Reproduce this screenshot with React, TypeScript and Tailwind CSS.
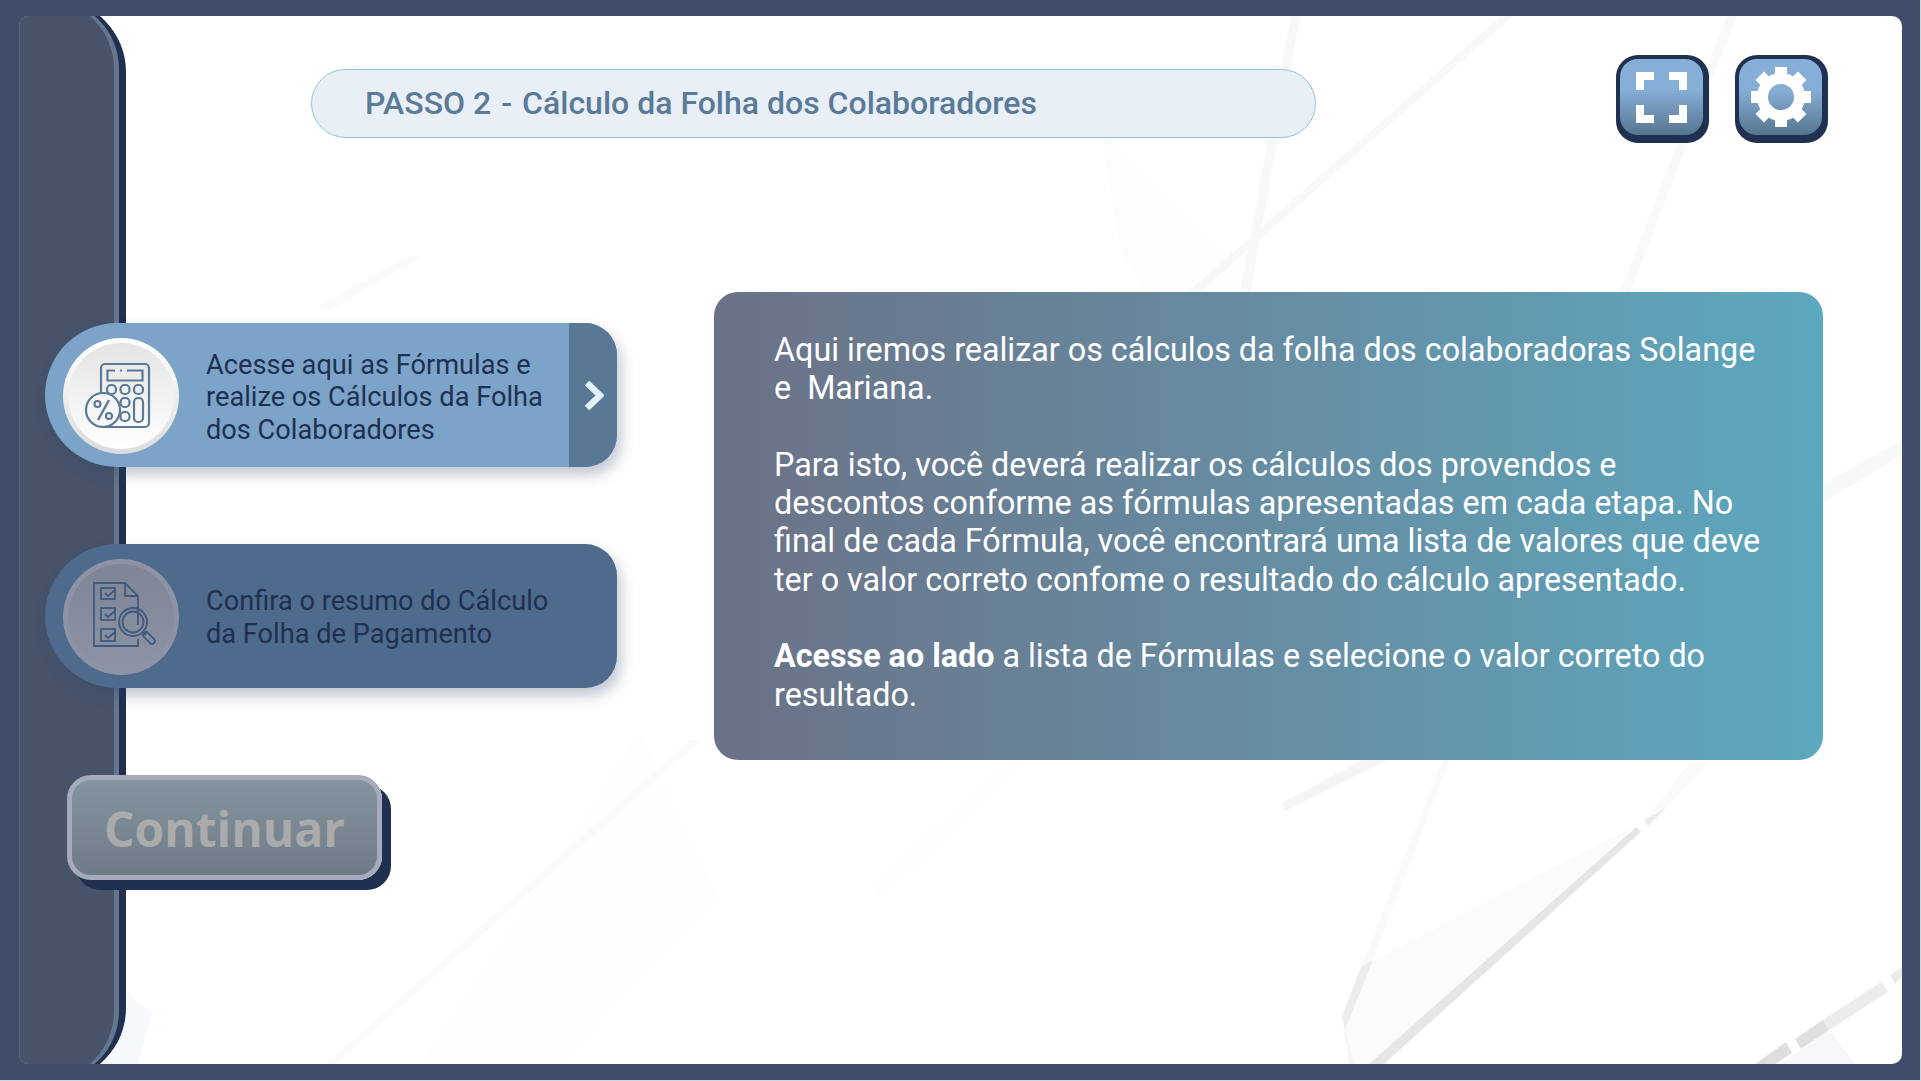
import React from "react";

function Shards() {
  return (
    <svg className="absolute inset-0 h-full w-full" viewBox="19 16 1883 1048" preserveAspectRatio="none" aria-hidden="true">
      {/* soft fills */}
      <polygon points="1636,825 1369,1064 1355,1064 1342,1017 1361,967" fill="#fafbfd" />
      <polygon points="1100,130 1270,300 1240,300 1150,300 1120,250" fill="#fdfdfe" />
      <polygon points="126,992 152,1014 138,1064 100,1064" fill="#f6f9fc" />
      <polygon points="1780,1064 1830,1030 1855,1064" fill="#f5f7fb" />
      <polygon points="640,730 720,900 560,1064 420,1064" fill="#fefefe" />
      {/* faint long lines */}
      <polygon points="1501,16 1513,16 1200,292 1188,292" fill="#f7f8f8" />
      <polygon points="1291,16 1300,16 1250,292 1240,292" fill="#f8f8f8" />
      <polygon points="1727,16 1737,16 1630,292 1620,292" fill="#f9f9f9" />
      <polygon points="1442,760 1450,760 1373,960 1361,967" fill="#f9fafa" />
      <polygon points="1362,760 1388,760 1285,812 1282,803" fill="#f4f6f5" />
      <polygon points="1690,763 1708,763 1648,826 1644,820" fill="#fafafa" />
      <polygon points="690,740 702,740 336,1064 326,1064" fill="#fafbfb" />
      <polygon points="1000,770 1040,745 880,900 870,885" fill="#fcfdfd" />
      <polygon points="1902,440 1902,455 1760,540 1740,530" fill="#f7f8f8" />
      <polygon points="410,255 420,258 330,310 320,305" fill="#fafafa" />
      {/* strong lines */}
      <polygon points="1361,967 1373,960 1345,1030 1342,1017" fill="#ececec" />
      <polygon points="1342,1017 1348,1040 1355,1064 1349,1064" fill="#f6f6f6" />
      <polygon points="1636,827 1641,832 1384,1064 1369,1064" fill="#e6e6e6" />
      <polygon points="1644,820 1666,808 1648,826" fill="#ebebeb" />
      <polygon points="1755,1064 1786,1042 1792,1053 1775,1064" fill="#dedede" />
      <polygon points="1795,1039 1823,1020 1829,1030 1801,1049" fill="#dedfde" />
      <polygon points="1823,1020 1881,982 1888,992 1829,1030" fill="#ebecec" />
      <polygon points="1890,975 1902,967 1902,977 1895,984" fill="#ebecec" />
    </svg>
  );
}

function CalculatorIcon() {
  const s = "#5a7a98";
  return (
    <svg className="block h-[106px] w-[106px]" viewBox="5 5 106 106" fill="none" stroke={s} strokeWidth="2.2">
      <rect x="38" y="26" width="48" height="63" rx="4" />
      <path d="M52 32.5 H44.5 V42.5 H79.5 V32.5 H64" />
      <path d="M57 32.5 h2" />
      <rect x="44" y="47" width="9" height="9" rx="4" />
      <rect x="57.5" y="47" width="9" height="9" rx="4" />
      <rect x="71" y="47" width="9" height="9" rx="4" />
      <rect x="57.5" y="60" width="9" height="9" rx="4" />
      <rect x="57.5" y="74" width="9" height="9" rx="4" />
      <rect x="71" y="60" width="9" height="24" rx="4" />
      <circle cx="40" cy="72" r="17" fill="#f6f6f6" />
      <circle cx="34.5" cy="66" r="3" />
      <circle cx="46" cy="78" r="3" />
      <path d="M46 62 L35 82" strokeWidth="2.4" />
    </svg>
  );
}

function ChecklistIcon() {
  const s = "#3f5a7c";
  return (
    <svg className="block h-[106px] w-[106px]" viewBox="5 5 106 106" fill="none" stroke={s} strokeWidth="1.8">
      <path d="M75 66 V37 L62 24 H31 V87 H75 V80" />
      <path d="M62 24 V37 H75" />
      <rect x="38" y="29" width="14" height="11" />
      <rect x="38" y="49" width="14" height="12" />
      <rect x="38" y="70" width="14" height="12" />
      <path d="M42 34 l3 3 l7 -6" />
      <path d="M42 55 l3 3 l7 -6" />
      <path d="M42 76 l3 3 l7 -6" />
      <circle cx="70" cy="63" r="14" />
      <circle cx="70" cy="63" r="10.5" />
      <path d="M80 73 l3 3" />
      <rect x="-2.8" y="-7" width="5.6" height="14" rx="2.6" transform="translate(86 79) rotate(-45)" />
    </svg>
  );
}

function ExpandIcon() {
  return (
    <svg className="h-[51px] w-[51px]" viewBox="0 0 51 51" fill="#ffffff">
      <path d="M0 0H18V8H8V18H0Z" />
      <path d="M33 0H51V18H43V8H33Z" />
      <path d="M0 33H8V43H18V51H0Z" />
      <path d="M43 33H51V51H33V43H43Z" />
    </svg>
  );
}

function GearIcon() {
  return (
    <svg className="h-[60px] w-[60px]" viewBox="0 0 60 60" fill="#ffffff">
      <circle cx="30" cy="30" r="18.5" fill="none" stroke="#ffffff" strokeWidth="11" />
      {[0, 45, 90, 135, 180, 225, 270, 315].map((a) => (
        <rect key={a} x="24" y="0" width="12" height="13" transform={`rotate(${a} 30 30)`} />
      ))}
    </svg>
  );
}

function SquareButton({ children }: { children: React.ReactNode }) {
  return (
    <div className="h-[88px] w-[93px] shrink-0 rounded-[22px] bg-[#1f3050] pb-2 pl-1 pr-[6px] pt-1">
      <div className="flex h-full w-full items-center justify-center rounded-[18px] bg-gradient-to-b from-[#86afd8] from-40% to-[#567690]">
        {children}
      </div>
    </div>
  );
}

export default function App() {
  return (
    <div className="h-[1081px] w-[1921px] overflow-hidden border-b border-r border-[#d3d6dc] bg-[#404d68] pl-[19px] pr-[18px] pt-4 font-['Roboto',sans-serif]">
      <main className="relative h-[1048px] w-[1883px] overflow-hidden rounded-[10px] bg-white">
        <Shards />

        <div className="absolute -bottom-[17px] -top-[17px] left-0 w-[107px] rounded-r-[73px] bg-[#1f3050]">
          <div className="h-full w-[100px] rounded-r-[70px] bg-[#67758c]">
            <div className="h-full w-[95px] rounded-r-[70px] border-l border-[#55627a] bg-[#465369]" />
          </div>
        </div>

        <div className="relative flex flex-col">
          <header className="flex items-start pl-[292px] pt-[39px]">
            <div className="mt-[14px] flex h-[69px] w-[1005px] items-center rounded-full border border-[#8fc3d2] bg-[#e8eff6] pb-[1px] pl-[53px] text-[32px] font-medium text-[#5a7a98]">
              <span>PASSO 2</span>
              <span className="mx-[10px]">-</span>
              <span>Cálculo da Folha dos Colaboradores</span>
            </div>
            <div className="ml-[300px] flex gap-[26px]">
              <SquareButton>
                <ExpandIcon />
              </SquareButton>
              <SquareButton>
                <GearIcon />
              </SquareButton>
            </div>
          </header>

          <section className="mt-[149px] flex items-start pl-[26px]">
            <div className="flex w-[572px] shrink-0 flex-col pt-[31px]">
              <button className="flex h-[144px] w-full items-center overflow-hidden rounded-l-[72px] rounded-r-[32px] bg-[#7ca3c8] text-left shadow-[4px_8px_14px_rgba(50,70,105,0.3)]">
                <span className="ml-[18px] mt-[1px] h-[116px] w-[116px] shrink-0 rounded-full bg-gradient-to-b from-white to-[#dcdcdc] p-[5px]">
                  <span className="block h-[106px] w-[106px] rounded-full bg-gradient-to-b from-[#e4e4e4] to-white">
                    <CalculatorIcon />
                  </span>
                </span>
                <span className="ml-[27px] mt-[5px] w-[345px] text-[27.2px] leading-[32.5px] text-[#1f3050]">
                  Acesse aqui as Fórmulas e realize os Cálculos da Folha dos Colaboradores
                </span>
                <span className="ml-auto flex h-full w-[48px] shrink-0 items-center justify-center bg-[#587896] pl-[2px]">
                  <svg className="h-[29px] w-[19px]" viewBox="0 0 19 29" fill="none" stroke="#e2f0fb" strokeWidth="6.5">
                    <path d="M2 2 L15 14.5 L2 27" />
                  </svg>
                </span>
              </button>

              <button className="mt-[77px] flex h-[144px] w-full items-center rounded-l-[72px] rounded-r-[32px] bg-[#4e6a8c] text-left shadow-[4px_8px_14px_rgba(50,70,105,0.3)]">
                <span className="ml-[18px] mt-[1px] h-[116px] w-[116px] shrink-0 rounded-full bg-[#8d93a5] p-[5px]">
                  <span className="block h-[106px] w-[106px] rounded-full bg-gradient-to-b from-[#7e8596] to-[#8c93a4]">
                    <ChecklistIcon />
                  </span>
                </span>
                <span className="ml-[27px] mt-[3px] w-[345px] text-[27.2px] leading-[32.5px] text-[#1f3050]">
                  Confira o resumo do Cálculo da Folha de Pagamento
                </span>
              </button>

              <button className="ml-[22px] mt-[87px] flex h-[105px] w-[315px] items-center justify-center rounded-[24px] border-[5px] border-[#a5abba] bg-gradient-to-b from-[#84949f] to-[#6e7c86] pt-[3px] font-['Open_Sans',sans-serif] text-[48px] font-bold text-[#ababab] shadow-[9px_10px_0_#1f3050]">
                Continuar
              </button>
            </div>

            <article className="ml-[97px] h-[468px] w-[1109px] rounded-[24px] bg-gradient-to-r from-[#6a7287] to-[#5ba8bf] px-[60px] pt-[38.5px] text-[32.3px] leading-[38.35px] text-white">
              <p>Aqui iremos realizar os cálculos da folha dos colaboradoras Solange e&nbsp; Mariana.</p>
              <p className="mt-[38.35px]">
                Para isto, você deverá realizar os cálculos dos provendos e descontos conforme as fórmulas apresentadas em cada etapa. No final de cada Fórmula, você encontrará uma lista de valores que deve ter o valor correto confome o resultado do cálculo apresentado.
              </p>
              <p className="mt-[38.35px]">
                <strong className="font-bold">Acesse ao lado</strong> a lista de Fórmulas e selecione o valor correto do resultado.
              </p>
            </article>
          </section>
        </div>
      </main>
    </div>
  );
}
